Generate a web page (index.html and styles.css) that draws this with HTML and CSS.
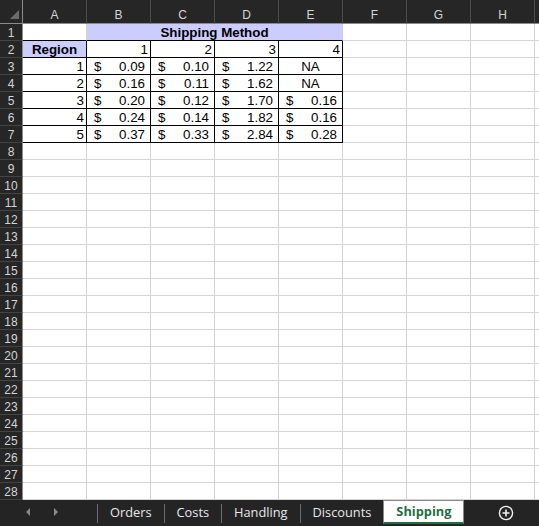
FILE: index.html
```html
<!DOCTYPE html>
<html>
<head>
<meta charset="utf-8">
<link rel="stylesheet" href="styles.css">
</head>
<body>
<div class="app">
  <div class="grid">
    <div class="corner"><svg width="22" height="23" viewBox="0 0 22 23"><polygon points="19,10 19,19 10,19" fill="#6b6b6b"/></svg></div>
    <div class="ch">A</div><div class="ch">B</div><div class="ch">C</div><div class="ch">D</div><div class="ch">E</div><div class="ch">F</div><div class="ch">G</div><div class="ch">H</div><div class="ch"></div>

    <div class="rh">1</div>
    <div class="c bb"></div>
    <div class="c span4 fill bold ctr bb nr">Shipping Method</div>
    <div class="c"></div><div class="c"></div><div class="c"></div><div class="c"></div>

    <div class="rh">2</div>
    <div class="c b fill bold ctr">Region</div>
    <div class="c b r">1</div><div class="c b r">2</div><div class="c b r">3</div><div class="c b r">4</div>
    <div class="c"></div><div class="c"></div><div class="c"></div><div class="c"></div>

    <div class="rh">3</div>
    <div class="c b r">1</div>
    <div class="c b acct"><span>$</span><span>0.09</span></div>
    <div class="c b acct"><span>$</span><span>0.10</span></div>
    <div class="c b acct"><span>$</span><span>1.22</span></div>
    <div class="c b ctr">NA</div>
    <div class="c"></div><div class="c"></div><div class="c"></div><div class="c"></div>

    <div class="rh">4</div>
    <div class="c b r">2</div>
    <div class="c b acct"><span>$</span><span>0.16</span></div>
    <div class="c b acct"><span>$</span><span>0.11</span></div>
    <div class="c b acct"><span>$</span><span>1.62</span></div>
    <div class="c b ctr">NA</div>
    <div class="c"></div><div class="c"></div><div class="c"></div><div class="c"></div>

    <div class="rh">5</div>
    <div class="c b r">3</div>
    <div class="c b acct"><span>$</span><span>0.20</span></div>
    <div class="c b acct"><span>$</span><span>0.12</span></div>
    <div class="c b acct"><span>$</span><span>1.70</span></div>
    <div class="c b acct"><span>$</span><span>0.16</span></div>
    <div class="c"></div><div class="c"></div><div class="c"></div><div class="c"></div>

    <div class="rh">6</div>
    <div class="c b r">4</div>
    <div class="c b acct"><span>$</span><span>0.24</span></div>
    <div class="c b acct"><span>$</span><span>0.14</span></div>
    <div class="c b acct"><span>$</span><span>1.82</span></div>
    <div class="c b acct"><span>$</span><span>0.16</span></div>
    <div class="c"></div><div class="c"></div><div class="c"></div><div class="c"></div>

    <div class="rh">7</div>
    <div class="c b r">5</div>
    <div class="c b acct"><span>$</span><span>0.37</span></div>
    <div class="c b acct"><span>$</span><span>0.33</span></div>
    <div class="c b acct"><span>$</span><span>2.84</span></div>
    <div class="c b acct"><span>$</span><span>0.28</span></div>
    <div class="c"></div><div class="c"></div><div class="c"></div><div class="c"></div>

    <div class="rh">8</div><div class="c"></div><div class="c"></div><div class="c"></div><div class="c"></div><div class="c"></div><div class="c"></div><div class="c"></div><div class="c"></div><div class="c"></div>
    <div class="rh">9</div><div class="c"></div><div class="c"></div><div class="c"></div><div class="c"></div><div class="c"></div><div class="c"></div><div class="c"></div><div class="c"></div><div class="c"></div>
    <div class="rh">10</div><div class="c"></div><div class="c"></div><div class="c"></div><div class="c"></div><div class="c"></div><div class="c"></div><div class="c"></div><div class="c"></div><div class="c"></div>
    <div class="rh">11</div><div class="c"></div><div class="c"></div><div class="c"></div><div class="c"></div><div class="c"></div><div class="c"></div><div class="c"></div><div class="c"></div><div class="c"></div>
    <div class="rh">12</div><div class="c"></div><div class="c"></div><div class="c"></div><div class="c"></div><div class="c"></div><div class="c"></div><div class="c"></div><div class="c"></div><div class="c"></div>
    <div class="rh">13</div><div class="c"></div><div class="c"></div><div class="c"></div><div class="c"></div><div class="c"></div><div class="c"></div><div class="c"></div><div class="c"></div><div class="c"></div>
    <div class="rh">14</div><div class="c"></div><div class="c"></div><div class="c"></div><div class="c"></div><div class="c"></div><div class="c"></div><div class="c"></div><div class="c"></div><div class="c"></div>
    <div class="rh">15</div><div class="c"></div><div class="c"></div><div class="c"></div><div class="c"></div><div class="c"></div><div class="c"></div><div class="c"></div><div class="c"></div><div class="c"></div>
    <div class="rh">16</div><div class="c"></div><div class="c"></div><div class="c"></div><div class="c"></div><div class="c"></div><div class="c"></div><div class="c"></div><div class="c"></div><div class="c"></div>
    <div class="rh">17</div><div class="c"></div><div class="c"></div><div class="c"></div><div class="c"></div><div class="c"></div><div class="c"></div><div class="c"></div><div class="c"></div><div class="c"></div>
    <div class="rh">18</div><div class="c"></div><div class="c"></div><div class="c"></div><div class="c"></div><div class="c"></div><div class="c"></div><div class="c"></div><div class="c"></div><div class="c"></div>
    <div class="rh">19</div><div class="c"></div><div class="c"></div><div class="c"></div><div class="c"></div><div class="c"></div><div class="c"></div><div class="c"></div><div class="c"></div><div class="c"></div>
    <div class="rh">20</div><div class="c"></div><div class="c"></div><div class="c"></div><div class="c"></div><div class="c"></div><div class="c"></div><div class="c"></div><div class="c"></div><div class="c"></div>
    <div class="rh">21</div><div class="c"></div><div class="c"></div><div class="c"></div><div class="c"></div><div class="c"></div><div class="c"></div><div class="c"></div><div class="c"></div><div class="c"></div>
    <div class="rh">22</div><div class="c"></div><div class="c"></div><div class="c"></div><div class="c"></div><div class="c"></div><div class="c"></div><div class="c"></div><div class="c"></div><div class="c"></div>
    <div class="rh">23</div><div class="c"></div><div class="c"></div><div class="c"></div><div class="c"></div><div class="c"></div><div class="c"></div><div class="c"></div><div class="c"></div><div class="c"></div>
    <div class="rh">24</div><div class="c"></div><div class="c"></div><div class="c"></div><div class="c"></div><div class="c"></div><div class="c"></div><div class="c"></div><div class="c"></div><div class="c"></div>
    <div class="rh">25</div><div class="c"></div><div class="c"></div><div class="c"></div><div class="c"></div><div class="c"></div><div class="c"></div><div class="c"></div><div class="c"></div><div class="c"></div>
    <div class="rh">26</div><div class="c"></div><div class="c"></div><div class="c"></div><div class="c"></div><div class="c"></div><div class="c"></div><div class="c"></div><div class="c"></div><div class="c"></div>
    <div class="rh">27</div><div class="c"></div><div class="c"></div><div class="c"></div><div class="c"></div><div class="c"></div><div class="c"></div><div class="c"></div><div class="c"></div><div class="c"></div>
    <div class="rh">28</div><div class="c"></div><div class="c"></div><div class="c"></div><div class="c"></div><div class="c"></div><div class="c"></div><div class="c"></div><div class="c"></div><div class="c"></div>
  </div>

  <div class="tabbar">
    <div class="nav">
      <svg class="arrow" width="6" height="8" viewBox="0 0 6 8"><polygon points="5,0 5,8 1,4" fill="#8a8a8a"/></svg>
      <svg class="arrow" width="6" height="8" viewBox="0 0 6 8"><polygon points="1,0 1,8 5,4" fill="#8a8a8a"/></svg>
    </div>
    <div class="tab sep">Orders</div>
    <div class="tab sep">Costs</div>
    <div class="tab sep">Handling</div>
    <div class="tab sep">Discounts</div>
    <div class="tab active">Shipping</div>
    <div class="add">
      <svg width="16" height="16" viewBox="0 0 16 16"><circle cx="8" cy="8" r="6.6" fill="none" stroke="#f0f0f0" stroke-width="1.4"/><path d="M8 4.5v7M4.5 8h7" stroke="#f0f0f0" stroke-width="1.6"/></svg>
    </div>
  </div>
</div>
</body>
</html>
```
FILE: styles.css
```css
* { box-sizing: border-box; }
html, body { margin: 0; padding: 0; background: #262626; }
.app {
  width: 539px;
  height: 526px;
  overflow: hidden;
  display: flex;
  flex-direction: column;
  background: #262626;
}
.grid {
  display: grid;
  grid-template-columns: 23px repeat(9, 64px);
  grid-template-rows: 24px repeat(28, 17px);
  width: 599px;
  height: 500px;
  flex: none;
  font-family: "Liberation Sans", Arial, sans-serif;
  font-size: 13.33px;
  color: #000;
}
.corner {
  background: #262626;
  border-right: 1px solid #8c8c8c;
  border-bottom: 1px solid #8c8c8c;
}
.corner svg { display: block; }
.ch {
  background: #262626;
  color: #d4d4d4;
  font-size: 12px;
  line-height: 16px;
  padding-top: 7px;
  text-align: center;
  border-right: 1px solid #4a4a4a;
  border-bottom: 1px solid #8c8c8c;
}
.rh {
  background: #262626;
  color: #d4d4d4;
  font-size: 12px;
  line-height: 16px;
  padding-top: 1px;
  text-align: center;
  border-right: 1px solid #8c8c8c;
  border-bottom: 1px solid #444;
}
.c {
  background: #fff;
  border-right: 1px solid #d4d4d4;
  border-bottom: 1px solid #d4d4d4;
  line-height: 16px;
  padding-top: 1px;
  white-space: nowrap;
  overflow: visible;
}
.b { border-right-color: #000; border-bottom-color: #000; }
.bb { border-bottom-color: #000; }
.nr { border-right-color: #ccccff; }
.span4 { grid-column: span 4; }
.fill { background: #ccccff; }
.bold { font-weight: bold; }
.ctr { text-align: center; }
.r { text-align: right; padding-right: 2px; }
.acct {
  display: flex;
  justify-content: space-between;
  padding-left: 7px;
  padding-right: 5px;
}

.tabbar {
  flex: none;
  height: 26px;
  display: flex;
  align-items: flex-start;
  background: #242424;
  font-family: "Open Sans", "Noto Sans", sans-serif;
  font-size: 12.8px;
  color: #e8e8e8;
}
.nav {
  width: 97px;
  height: 24px;
  display: flex;
  align-items: center;
  padding-left: 25px;
  gap: 22px;
}
.arrow { display: block; }
.tab {
  height: 22px;
  margin-top: 1px;
  padding: 0 12px;
  line-height: 22px;
  white-space: nowrap;
}
.sep { border-left: 1px solid #6e6e6e; margin-top: 4px; height: 19px; line-height: 17px; }
.active {
  margin-top: 0;
  height: 24px;
  background: #fff;
  color: #1d7044;
  font-weight: bold;
  border: 1px solid #8a8a8a;
  border-bottom: 2px solid #1d7044;
  line-height: 21px;
}
.add {
  padding-top: 5px;
  margin-left: 34px;
}
.add svg { display: block; }
```
